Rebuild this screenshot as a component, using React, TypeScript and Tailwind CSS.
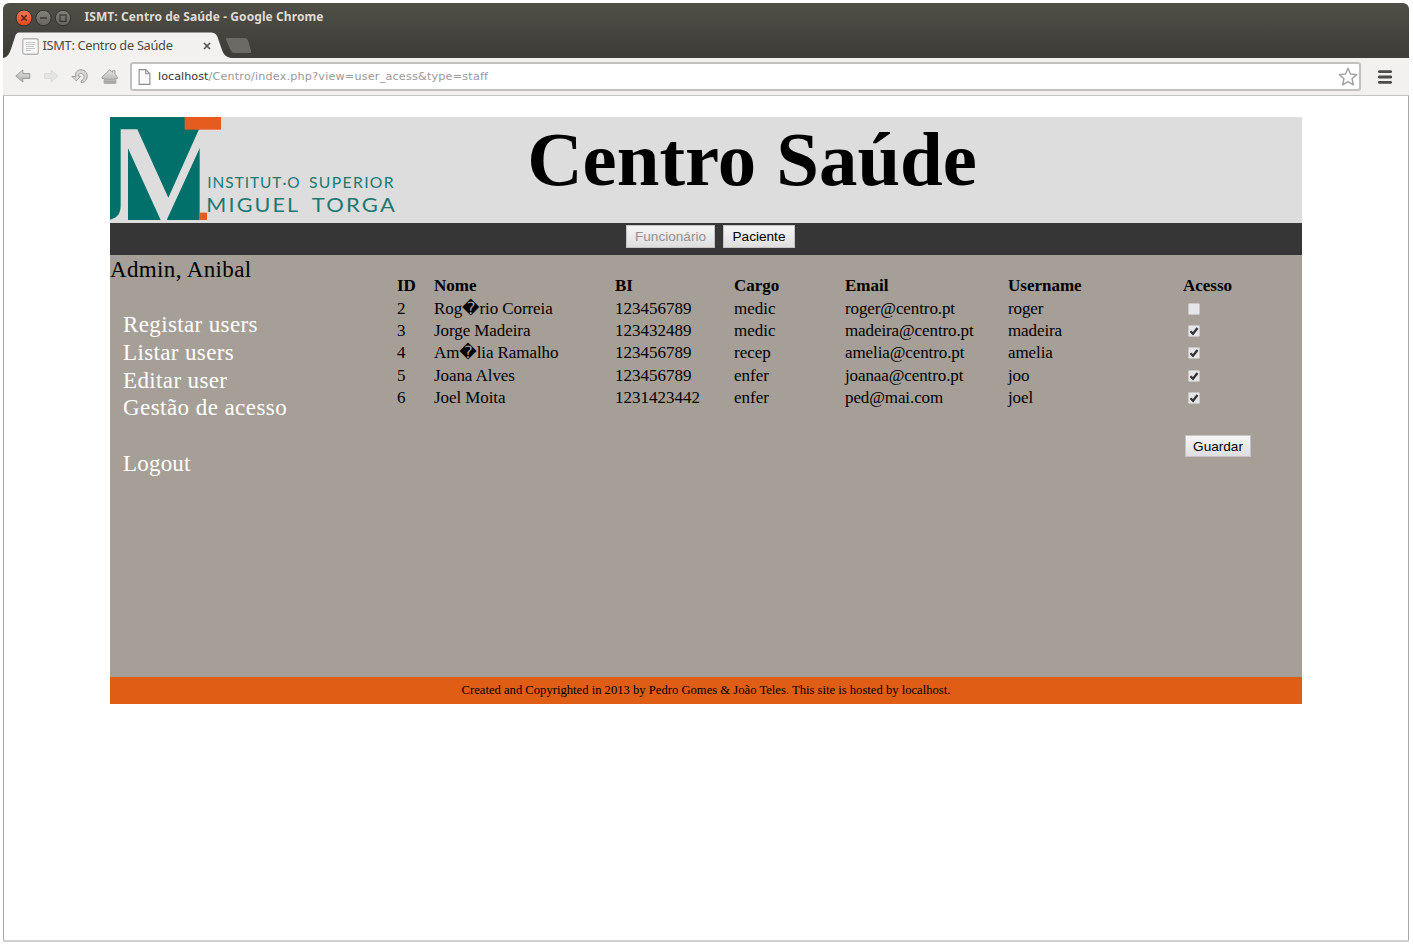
import type { ReactNode } from 'react';

type Staff = {
  id: number;
  name: string;
  bi: string;
  role: string;
  email: string;
  username: string;
  access: boolean;
};

const staff: Staff[] = [
  { id: 2, name: 'Rog\uFFFDrio Correia', bi: '123456789', role: 'medic', email: 'roger@centro.pt', username: 'roger', access: false },
  { id: 3, name: 'Jorge Madeira', bi: '123432489', role: 'medic', email: 'madeira@centro.pt', username: 'madeira', access: true },
  { id: 4, name: 'Am\uFFFDlia Ramalho', bi: '123456789', role: 'recep', email: 'amelia@centro.pt', username: 'amelia', access: true },
  { id: 5, name: 'Joana Alves', bi: '123456789', role: 'enfer', email: 'joanaa@centro.pt', username: 'joo', access: true },
  { id: 6, name: 'Joel Moita', bi: '1231423442', role: 'enfer', email: 'ped@mai.com', username: 'joel', access: true },
];

const headings = ['ID', 'Nome', 'BI', 'Cargo', 'Email', 'Username', 'Acesso'];
const columns = 'grid grid-cols-[37px_181px_119px_111px_163px_175px_1fr] h-[22.4px] items-center';

function WindowControls() {
  return (
    <svg width="58" height="18" viewBox="0 0 58 18" className="block">
      <defs>
        <linearGradient id="close" x1="0" y1="0" x2="0" y2="1">
          <stop offset="0" stopColor="#f4795a" />
          <stop offset="1" stopColor="#e0451b" />
        </linearGradient>
        <linearGradient id="ctl" x1="0" y1="0" x2="0" y2="1">
          <stop offset="0" stopColor="#85827b" />
          <stop offset="1" stopColor="#65635d" />
        </linearGradient>
      </defs>
      <circle cx="9" cy="9" r="8" fill="url(#close)" stroke="#33312c" />
      <path d="M6.3 6.3l5.4 5.4M11.7 6.3l-5.4 5.4" stroke="#5c2313" strokeWidth="1.5" />
      <circle cx="28.5" cy="9" r="7.7" fill="url(#ctl)" stroke="#33312c" />
      <path d="M25 9h7" stroke="#3b3934" strokeWidth="1.5" />
      <circle cx="48" cy="9" r="7.7" fill="url(#ctl)" stroke="#33312c" />
      <rect x="45" y="6" width="6" height="6.4" fill="none" stroke="#3b3934" strokeWidth="1.3" />
    </svg>
  );
}

function TabStrip() {
  return (
    <div className="relative h-[26px]">
      <svg width="260" height="26" viewBox="0 0 260 26" className="absolute left-0 top-0">
        <path d="M0 26 C5 25 6 22 8 17 L12 5 C13 1.5 14 .5 17 .5 H207 C211 .5 213 1.5 214.500 5 L219 18 C221 23 223 25 228 26 Z" fill="#f2f1f0" />
        <path d="M224 6 H241 C243.500 6 244.500 7 245.200 9 L248 18.500 C248.500 20.500 248 21 246 21 H231.500 C229.500 21 228.500 20.200 227.800 18.500 L223.300 8.500 C222.600 6.700 222.800 6 224 6 Z" fill="#6b6a65" />
      </svg>
      <div className="relative flex h-full items-center pl-[18.500px]">
        <svg width="17" height="17" viewBox="0 0 17 17" className="mt-[2px]">
          <rect x=".75" y=".75" width="15.500" height="15.500" rx="2" fill="#f8f8f8" stroke="#b4b4b2" strokeWidth="1.300" />
          <path d="M4 4.500h9M4 6.500h9M4 8.500h8M4 10.500h9M4 12.500h5" stroke="#c4c4c2" />
        </svg>
        <span className="ml-[4px] mt-[2px] w-[160px] whitespace-nowrap font-['Noto_Sans',sans-serif] text-[12.800px] tracking-[-0.300px] text-[#4b4b49]">
          ISMT: Centro de Saúde
        </span>
        <svg width="8" height="8" viewBox="0 0 8 8" className="mt-[2px]">
          <path d="M1 1l6 6M7 1l-6 6" stroke="#555553" strokeWidth="1.700" />
        </svg>
      </div>
    </div>
  );
}

function NavIcons() {
  return (
    <svg width="106" height="20" viewBox="0 0 106 20" className="block">
      <defs>
        <linearGradient id="tool" x1="0" y1="0" x2="0" y2="1">
          <stop offset="0" stopColor="#e2e2e0" />
          <stop offset="1" stopColor="#adadab" />
        </linearGradient>
      </defs>
      <g strokeWidth="1" strokeLinejoin="round">
        <path d="M.8 9 L7.800 3 V6.500 H14.800 V11.500 H7.800 V15 Z" fill="url(#tool)" stroke="#9b9b99" />
        <path d="M43 9 L36.200 3.200 V6.500 H29.500 V11.500 H36.200 V15 Z" fill="#e4e4e2" stroke="#dadad8" />
        <path d="M62.500 9.700 C61 5.500 64 2.800 67.500 2.800 C72.500 2.800 74.800 7.500 73.300 11.500 C72.300 14.300 70 15.600 67.800 15.800 L67.500 14 C70.500 12.500 71.200 10.300 70 8 C68.600 5.500 65 6 64.800 9 L67.300 9.300 L62.800 13.800 L58.300 9.300 Z" transform="translate(-1.500 0)" fill="#d8d8d6" stroke="#9d9d9b" />
        <g transform="translate(-1 0)">
          <path d="M88 10 L95.700 2.900 L98.500 5.300 V3.800 H101 V7.600 L103.500 10 V11.500 H101.800 V16.300 H90.200 V11.500 H88 Z" fill="url(#tool)" stroke="#a2a2a0" />
          <path d="M91 12.200h10M91 14.400h10" stroke="#9e9e9c" strokeWidth=".8" />
        </g>
      </g>
    </svg>
  );
}

function Toolbar() {
  return (
    <div className="flex h-[38px] items-center border-b border-[#c3c3c1] bg-[#f2f1f0] pl-[12px] pr-[17px]">
      <NavIcons />
      <div className="ml-[9px] flex h-[29px] w-[1231px] items-center rounded-[3px] border-2 border-[#c2c1bf] bg-white pl-[6px]">
        <svg width="13" height="16" viewBox="0 0 12 16" className="mt-[1px]">
          <path d="M.6 .6 H7.200 L11.400 4.800 V15.400 H.6 Z M7.200 .6 V4.800 H11.400" fill="#fafafa" stroke="#8d8d8b" strokeWidth="1.100" />
        </svg>
        <span className="ml-[7px] mt-[1px] flex-1 whitespace-nowrap font-['DejaVu_Sans',sans-serif] text-[11.200px] tracking-[0.200px] text-[#999997]">
          <span className="tracking-[0.020px] text-[#333]">localhost</span>/Centro/index.php?view=user_acess&amp;type=staff
        </span>
        <svg width="20" height="20" viewBox="0 0 20 20" className="mr-[1px]">
          <path d="M10 1.300 L12.500 7 L18.700 7.600 L14 11.700 L15.400 17.900 L10 14.600 L4.600 17.900 L6 11.700 L1.300 7.600 L7.500 7 Z" fill="#fdfdfd" stroke="#a0a09e" strokeWidth="1.400" strokeLinejoin="round" />
        </svg>
      </div>
      <svg width="14" height="14" viewBox="0 0 14 14" className="ml-auto">
        <path d="M1.300 1.700h11.400M1.300 7h11.400M1.300 12.300h11.400" stroke="#4b4b49" strokeWidth="2.800" strokeLinecap="round" />
      </svg>
    </div>
  );
}

function Logo() {
  return (
    <svg width="286.670" height="104" viewBox="30 36 860 312" className="block shrink-0">
      <rect x="30" y="36" width="269" height="309" fill="#02706a" />
      <path d="M62 73 H112 L205 278 L297 73 H302 V130 H299 L200 345 H182 L84 130 V348 H30 V344 C54 338 62 325 62 300 Z" fill="#ddd" />
      <rect x="254" y="36" width="109" height="38" fill="#e65c1e" />
      <rect x="299" y="323" width="22" height="22" fill="#e65c1e" />
      <g fill="#1b7873" fontFamily="Lato, sans-serif">
        <text x="322" y="248" fontSize="47" letterSpacing="3" textLength="280" lengthAdjust="spacingAndGlyphs">INSTITUT·O</text>
        <text x="627" y="248" fontSize="47" letterSpacing="4" textLength="258" lengthAdjust="spacingAndGlyphs">SUPERIOR</text>
        <text x="319" y="321" fontSize="60" letterSpacing="6" textLength="282" lengthAdjust="spacingAndGlyphs">MIGUEL</text>
        <text x="635" y="321" fontSize="60" letterSpacing="6" textLength="256" lengthAdjust="spacingAndGlyphs">TORGA</text>
      </g>
    </svg>
  );
}

function FormButton({ children, disabled = false, className }: { children: ReactNode; disabled?: boolean; className: string }) {
  return (
    <button
      disabled={disabled}
      className={`flex items-center justify-center border border-[#c4c4c4] bg-gradient-to-b from-[#f6f6f6] to-[#dedede] font-['Liberation_Sans',sans-serif] text-[13.600px] leading-none text-black disabled:text-[#929292] ${className}`}
    >
      {children}
    </button>
  );
}

function AccessBox({ checked }: { checked: boolean }) {
  return (
    <svg width="12" height="12" viewBox="0 0 12 12" className="ml-[4.500px] block" role="checkbox" aria-checked={checked}>
      <rect x=".5" y=".5" width="11" height="11" rx="1" fill="#e6e6e8" stroke="#c9c8c8" />
      {checked && <path d="M2.500 6.200 L5 8.700 L9.500 3" fill="none" stroke="#333" strokeWidth="2.300" />}
    </svg>
  );
}

function Sidebar() {
  return (
    <aside className="w-[287px] shrink-0 pt-[0.500px] text-[23px] leading-[27.700px] tracking-[0.370px]">
      <p className="text-black">Admin, Anibal</p>
      <nav className="mt-[28px] flex flex-col pl-[13px] text-white">
        <a>Registar users</a>
        <a>Listar users</a>
        <a>Editar user</a>
        <a className="tracking-[0.440px]">Gestão de acesso</a>
        <a className="mt-[27.700px] tracking-[0.200px]">Logout</a>
      </nav>
    </aside>
  );
}

function StaffTable() {
  return (
    <section className="flex-1 pt-[20px] text-[17px] leading-[22px] text-black">
      <div className={`${columns} font-bold`}>
        {headings.map((h) => (
          <span key={h}>{h}</span>
        ))}
      </div>
      {staff.map((s) => (
        <div key={s.id} className={columns}>
          <span>{s.id}</span>
          <span className="whitespace-nowrap tracking-[-0.080px]">{s.name}</span>
          <span>{s.bi}</span>
          <span>{s.role}</span>
          <span className="tracking-[-0.100px]">{s.email}</span>
          <span className="tracking-[-0.100px]">{s.username}</span>
          <AccessBox checked={s.access} />
        </div>
      ))}
      <FormButton className="ml-[788px] mt-[26px] h-[22px] w-[66px]">Guardar</FormButton>
    </section>
  );
}

export default function App() {
  return (
    <div className="h-[945px] w-[1413px] overflow-hidden bg-white pl-[3px] pt-[3px]">
      <div className="flex h-[939px] w-[1406px] flex-col overflow-hidden rounded-t-[6px] border-b-2 border-[#d0d0d0] bg-white">
        <header className="bg-gradient-to-b from-[#504f47] via-[#3f3e39] to-[#3b3a36]">
          <div className="flex h-[29px] items-center pl-[12px]">
            <WindowControls />
            <h1 className="-mt-[2px] ml-[11.500px] whitespace-nowrap font-['Noto_Sans',sans-serif] text-[12px] font-bold tracking-[0.080px] text-[#dfdbd2]">
              ISMT: Centro de Saúde - Google Chrome
            </h1>
          </div>
          <TabStrip />
          <Toolbar />
        </header>
        <main className="flex-1 border-x border-[#a5a5a5] pl-[106px] pt-[21px] font-['Liberation_Serif','DejaVu_Sans',serif]">
          <div className="w-[1192px]">
            <div className="flex h-[106px] bg-[#ddd]">
              <Logo />
              <h2 className="ml-[130.500px] whitespace-nowrap text-[76.800px] font-bold leading-[86px] text-black [word-spacing:1px]">Centro Saúde</h2>
            </div>
            <div className="flex h-[32px] gap-[8px] bg-[#363636] pl-[516px] pt-[2px]">
              <FormButton disabled className="h-[23px] w-[89px]">Funcionário</FormButton>
              <FormButton className="h-[23px] w-[72px]">Paciente</FormButton>
            </div>
            <div className="flex h-[422px] bg-[#a69f98]">
              <Sidebar />
              <StaffTable />
            </div>
            <footer className="flex h-[27px] items-center justify-center bg-[#df5d15] text-[12.640px] text-black">
              Created and Copyrighted in 2013 by Pedro Gomes &amp; João Teles. This site is hosted by localhost.
            </footer>
          </div>
        </main>
      </div>
    </div>
  );
}
